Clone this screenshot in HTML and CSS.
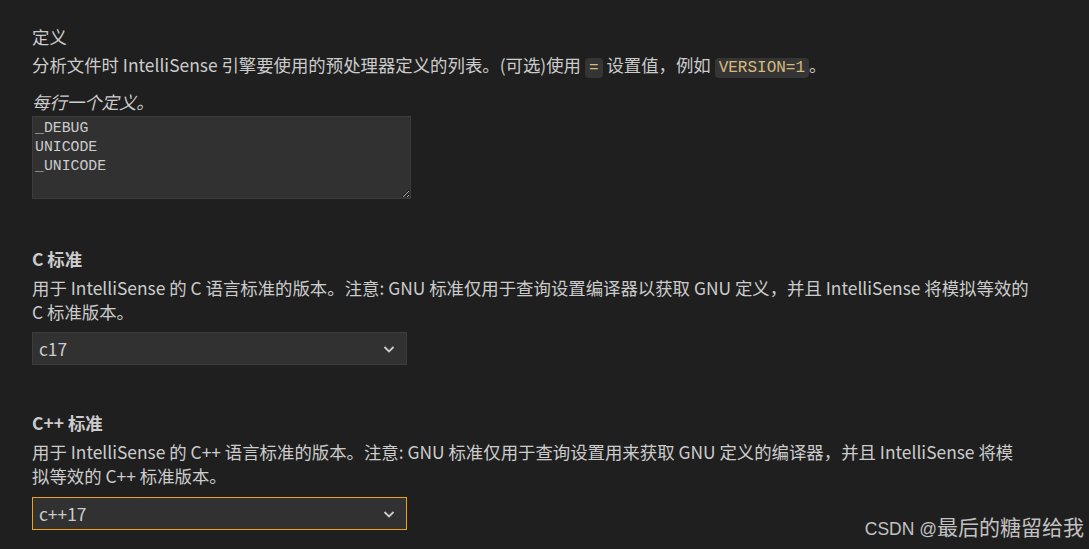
FILE: index.html
```html
<!DOCTYPE html>
<html lang="zh-CN">
<head>
<meta charset="utf-8">
<title>C/C++ 设置</title>
<link rel="stylesheet" href="styles.css">
</head>
<body>
<main class="settings">
  <section class="setting setting-defines">
    <div class="title">定义</div>
    <div class="desc">分析文件时 IntelliSense 引擎要使用的预处理器定义的列表。(可选)使用 <code class="code">=</code> 设置值，例如 <code class="code">VERSION=1</code>。</div>
    <div class="hint">每行一个定义。</div>
    <textarea class="defs" spellcheck="false">_DEBUG
UNICODE
_UNICODE</textarea>
  </section>

  <section class="setting setting-cstd">
    <div class="title"><b>C 标准</b></div>
    <div class="desc">用于 IntelliSense 的 C 语言标准的版本。注意: GNU 标准仅用于查询设置编译器以获取 GNU 定义，并且 IntelliSense 将模拟等效的<br>C 标准版本。</div>
    <div class="select">
      <span class="select-value">c17</span>
      <svg class="chevron" width="14" height="14" viewBox="0 0 14 14"><path d="M2.5 5 L7 9.5 L11.5 5" fill="none" stroke="#cccccc" stroke-width="1.8"/></svg>
    </div>
  </section>

  <section class="setting setting-cppstd">
    <div class="title"><b>C++ 标准</b></div>
    <div class="desc">用于 IntelliSense 的 C++ 语言标准的版本。注意: GNU 标准仅用于查询设置用来获取 GNU 定义的编译器，并且 IntelliSense 将模<br>拟等效的 C++ 标准版本。</div>
    <div class="select select-focused">
      <span class="select-value">c++17</span>
      <svg class="chevron" width="14" height="14" viewBox="0 0 14 14"><path d="M2.5 5 L7 9.5 L11.5 5" fill="none" stroke="#cccccc" stroke-width="1.8"/></svg>
    </div>
  </section>
</main>
<div class="watermark">CSDN @<span class="watermark-cjk">最后的糖留给我</span></div>
</body>
</html>
```

FILE: styles.css
```css
html, body {
  margin: 0;
  padding: 0;
  background: #1f1f1f;
  height: 100%;
  overflow: hidden;
}

body {
  font-family: "Noto Sans CJK SC", "Noto Sans", sans-serif;
  font-size: 17.4px;
  color: #cccccc;
  position: relative;
}

.settings {
  padding: 25px 0 0 32px;
  display: flex;
  flex-direction: column;
}

.setting {
  display: flex;
  flex-direction: column;
  align-items: flex-start;
}

.title {
  line-height: 24px;
  height: 24px;
  white-space: nowrap;
}

.title b {
  font-weight: 700;
}

.desc {
  line-height: 24px;
  white-space: nowrap;
  margin-top: 4px;
}

.setting-cstd .desc,
.setting-cppstd .desc {
  margin-top: 5px;
}

.code {
  font-family: "Liberation Mono", "DejaVu Sans Mono", monospace;
  font-size: 16px;
  color: #d7ba7d;
  background: #353535;
  border-radius: 4px;
  padding: 1px 4px;
}

.hint {
  font-style: italic;
  line-height: 24px;
  margin-top: 10px;
}

.defs {
  margin: 2px 0 0 0;
  box-sizing: border-box;
  width: 379px;
  height: 83px;
  background: #313131;
  border: 1px solid #3c3c3c;
  border-radius: 0;
  color: #cccccc;
  font-family: "Liberation Mono", "DejaVu Sans Mono", monospace;
  font-size: 14.8px;
  line-height: 19px;
  padding: 2px 2px;
  resize: vertical;
  outline: none;
  color-scheme: dark;
}

.setting-cstd {
  margin-top: 48px;
}

.setting-cppstd {
  margin-top: 46px;
}

.select {
  box-sizing: border-box;
  width: 375px;
  height: 33px;
  margin-top: 8px;
  background: #313131;
  border: 1px solid #3c3c3c;
  display: flex;
  align-items: center;
  justify-content: space-between;
  padding: 0 10px 0 6px;
}

.setting-cppstd .select {
  margin-top: 9px;
}

.select-focused {
  border-color: #eda315;
}

.select-value {
  line-height: 24px;
}

.chevron {
  display: block;
}

.watermark {
  position: absolute;
  right: 5px;
  bottom: 8px;
  font-family: "Liberation Sans", Arial, sans-serif;
  font-size: 17.5px;
  color: #c2c2c2;
  white-space: nowrap;
  line-height: 24px;
}

.watermark-cjk {
  font-family: "Noto Sans CJK SC", sans-serif;
  font-size: 21px;
}
```
